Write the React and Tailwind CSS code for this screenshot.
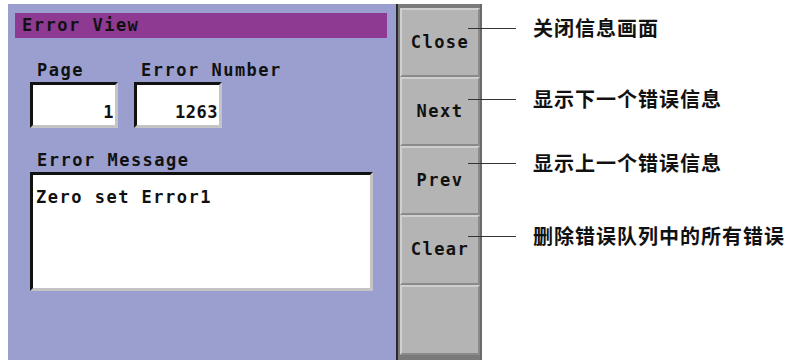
const mono = { fontFamily: '"DejaVu Sans Mono", "Liberation Mono", monospace' }

function Field({ label, value, width }) {
  return (
    <div className="flex flex-col">
      <div className="h-[22px] pl-[7px] text-[17px] font-bold leading-[22px] tracking-[1.5px] text-[#111]">{label}</div>
      <div
        className={`${width} mt-[1px] h-[46px] border-t-[3px] border-l-[3px] border-b-[3px] border-r-[3px] border-t-[#111] border-l-[#111] border-b-[#c4c4c4] border-r-[#c4c4c4] bg-white flex items-end justify-end pb-[3px] pr-[1px] text-[17px] font-bold leading-[20px] tracking-[0.5px] text-[#111]`}
      >
        {value}
      </div>
    </div>
  )
}

function SideButton({ label, h }) {
  return (
    <div
      className={`${h} flex items-center justify-center border-t-2 border-l-2 border-b-2 border-r-2 border-t-[#cfcfcf] border-l-[#cfcfcf] border-b-[#8a8a8a] border-r-[#8a8a8a] bg-[#b4b4b4] text-[17px] font-bold tracking-[1.5px] text-[#111]`}
    >
      {label}
    </div>
  )
}

function Note({ text, mt }) {
  return (
    <div className={`${mt} flex h-[28px] items-center`}>
      <div className="h-px w-[48px] bg-[#333]" />
      <div
        className="ml-[17px] whitespace-nowrap text-[20px] font-bold leading-[28px] tracking-[1px] text-[#111]"
        style={{ fontFamily: '"Noto Sans CJK SC", "Noto Sans", sans-serif' }}
      >
        {text}
      </div>
    </div>
  )
}

export default function App() {
  return (
    <div className="flex h-[360px] w-[791px] overflow-hidden bg-white pl-[8px] pt-[4px]" style={mono}>
      {/* error view panel */}
      <div className="flex w-[388px] flex-col bg-[#9a9fd0] px-[7px] pt-[9px]">
        <div className="h-[25px] w-[372px] bg-[#8e3a93] pl-[7px] text-[17px] font-bold leading-[25px] tracking-[1.5px] text-[#111]">
          Error View
        </div>
        <div className="mt-[21px] flex gap-[16px] pl-[15px]">
          <Field label="Page" value="1" width="w-[88px]" />
          <Field label="Error Number" value="1263" width="w-[88px]" />
        </div>
        <div className="mt-[21px] pl-[22px] text-[17px] font-bold leading-[22px] tracking-[1.5px] text-[#111]">
          Error Message
        </div>
        <div className="ml-[15px] mt-[1px] h-[119px] w-[343px] border-t-[3px] border-l-[3px] border-b-[3px] border-r-[3px] border-t-[#111] border-l-[#111] border-b-[#c4c4c4] border-r-[#c4c4c4] bg-white pl-[3px] pt-[12px] text-[17px] font-bold leading-[20px] tracking-[1.5px] text-[#111]">
          Zero set Error1
        </div>
      </div>

      {/* divider */}
      <div className="w-[2px] bg-[#2a2a2a]" />

      {/* soft key column */}
      <div className="flex w-[84px] flex-col border-r-2 border-r-[#6a6a6a] bg-[#7a7a7a] pb-[5px] pl-[2px] pt-[4px]">
        <SideButton label="Close" h="h-[69px]" />
        <SideButton label="Next" h="h-[69px]" />
        <SideButton label="Prev" h="h-[69px]" />
        <SideButton label="Clear" h="h-[70px]" />
        <SideButton label="" h="h-[70px]" />
      </div>

      {/* annotations */}
      <div className="relative z-10 ml-[-14px] flex flex-col">
        <Note text="关闭信息画面" mt="mt-[10px]" />
        <Note text="显示下一个错误信息" mt="mt-[43px]" />
        <Note text="显示上一个错误信息" mt="mt-[36px]" />
        <Note text="删除错误队列中的所有错误" mt="mt-[45px]" />
      </div>
    </div>
  )
}
